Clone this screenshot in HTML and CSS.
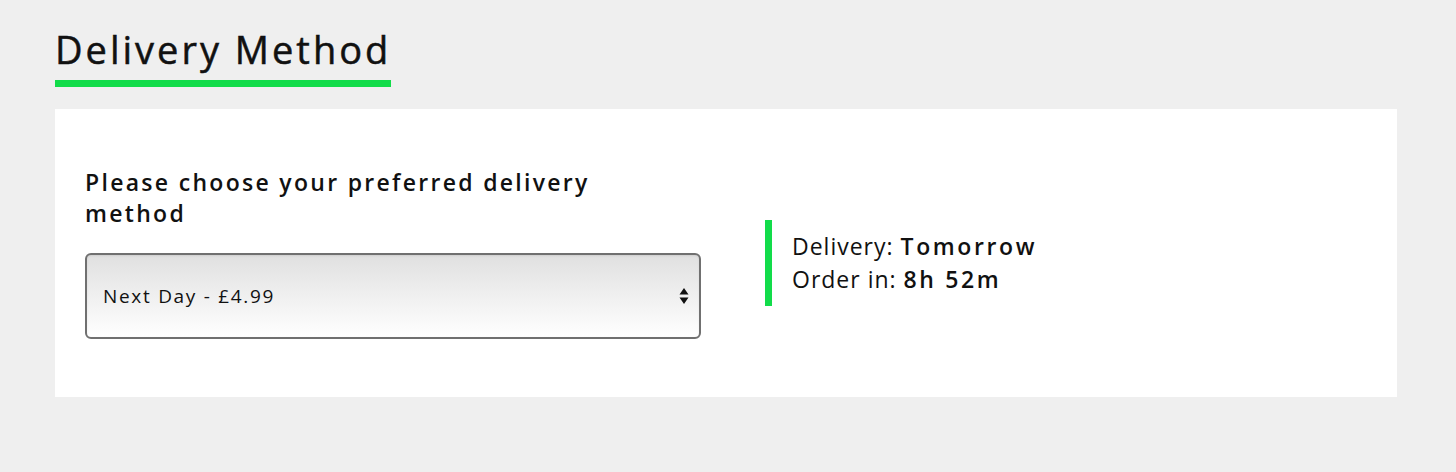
FILE: index.html
```html
<!DOCTYPE html>
<html lang="en">
<head>
  <meta charset="UTF-8">
  <meta name="viewport" content="width=device-width, initial-scale=1.0">
  <title>Delivery Method</title>
  <link rel="stylesheet" href="styles.css">
</head>
<body>

  <div class="page">
    <h2 class="section-title">Delivery Method</h2>

    <div class="card">
      <div class="choose">
        <label for="method" class="choose-label">Please choose your preferred delivery method</label>
        <div class="select-wrap">
          <select id="method" name="method">
            <option value="next-day">Next Day - £4.99</option>
            <option value="standard">Standard - Free</option>
          </select>
          <span class="arrows">
            <svg width="10" height="18" viewBox="0 0 10 18"><path d="M5 1 L9.5 7.5 L0.5 7.5 Z M0.5 10.5 L9.5 10.5 L5 17 Z" fill="#111"/></svg>
          </span>
        </div>
      </div>

      <div class="eta">
        <p>Delivery: <strong>Tomorrow</strong></p>
        <p>Order in: <strong>8h 52m</strong></p>
      </div>
    </div>
  </div>

</body>
</html>
```

FILE: styles.css
```css
body { margin: 0; background-color: #efefef; font-family: "Open Sans", Arial, sans-serif; color: #111; }
.page { padding: 26px 59px 74px 55px; }
.section-title { display: inline-block; margin: 0 0 22px; padding: 0 0 8px 0; font-size: 38px; font-weight: 500; line-height: 46px; border-bottom: 7px solid #12dc4a; letter-spacing: 3px; -webkit-text-stroke: 0.5px #111; }
.card { background-color: #fff; display: flex; align-items: center; gap: 64px; padding: 58px 30px 58px 30px; }
.choose { width: 616px; }
.choose-label { display: block; font-size: 23px; font-weight: 600; line-height: 31px; letter-spacing: 2.3px; width: 610px; margin-bottom: 24px; }
.select-wrap { position: relative; }
select { -webkit-appearance: none; appearance: none; width: 100%; height: 86px; padding: 0 16px; font-family: inherit; font-size: 19px; letter-spacing: 1.7px; color: #111; border: 2px solid #707070; border-radius: 6px; background: linear-gradient(#e0e0e0, #ffffff); box-shadow: inset 0 1px 2px rgba(0,0,0,0.08); }
.arrows { position: absolute; right: 12px; top: 34px; pointer-events: none; }
.eta { margin-top: 20px; border-left: 7px solid #12dc4a; padding: 10px 0 10px 20px; font-size: 23px; line-height: 33px; letter-spacing: 1px; }
.eta p { margin: 0; }
.eta strong { font-weight: 600; letter-spacing: 2.6px; }
```
